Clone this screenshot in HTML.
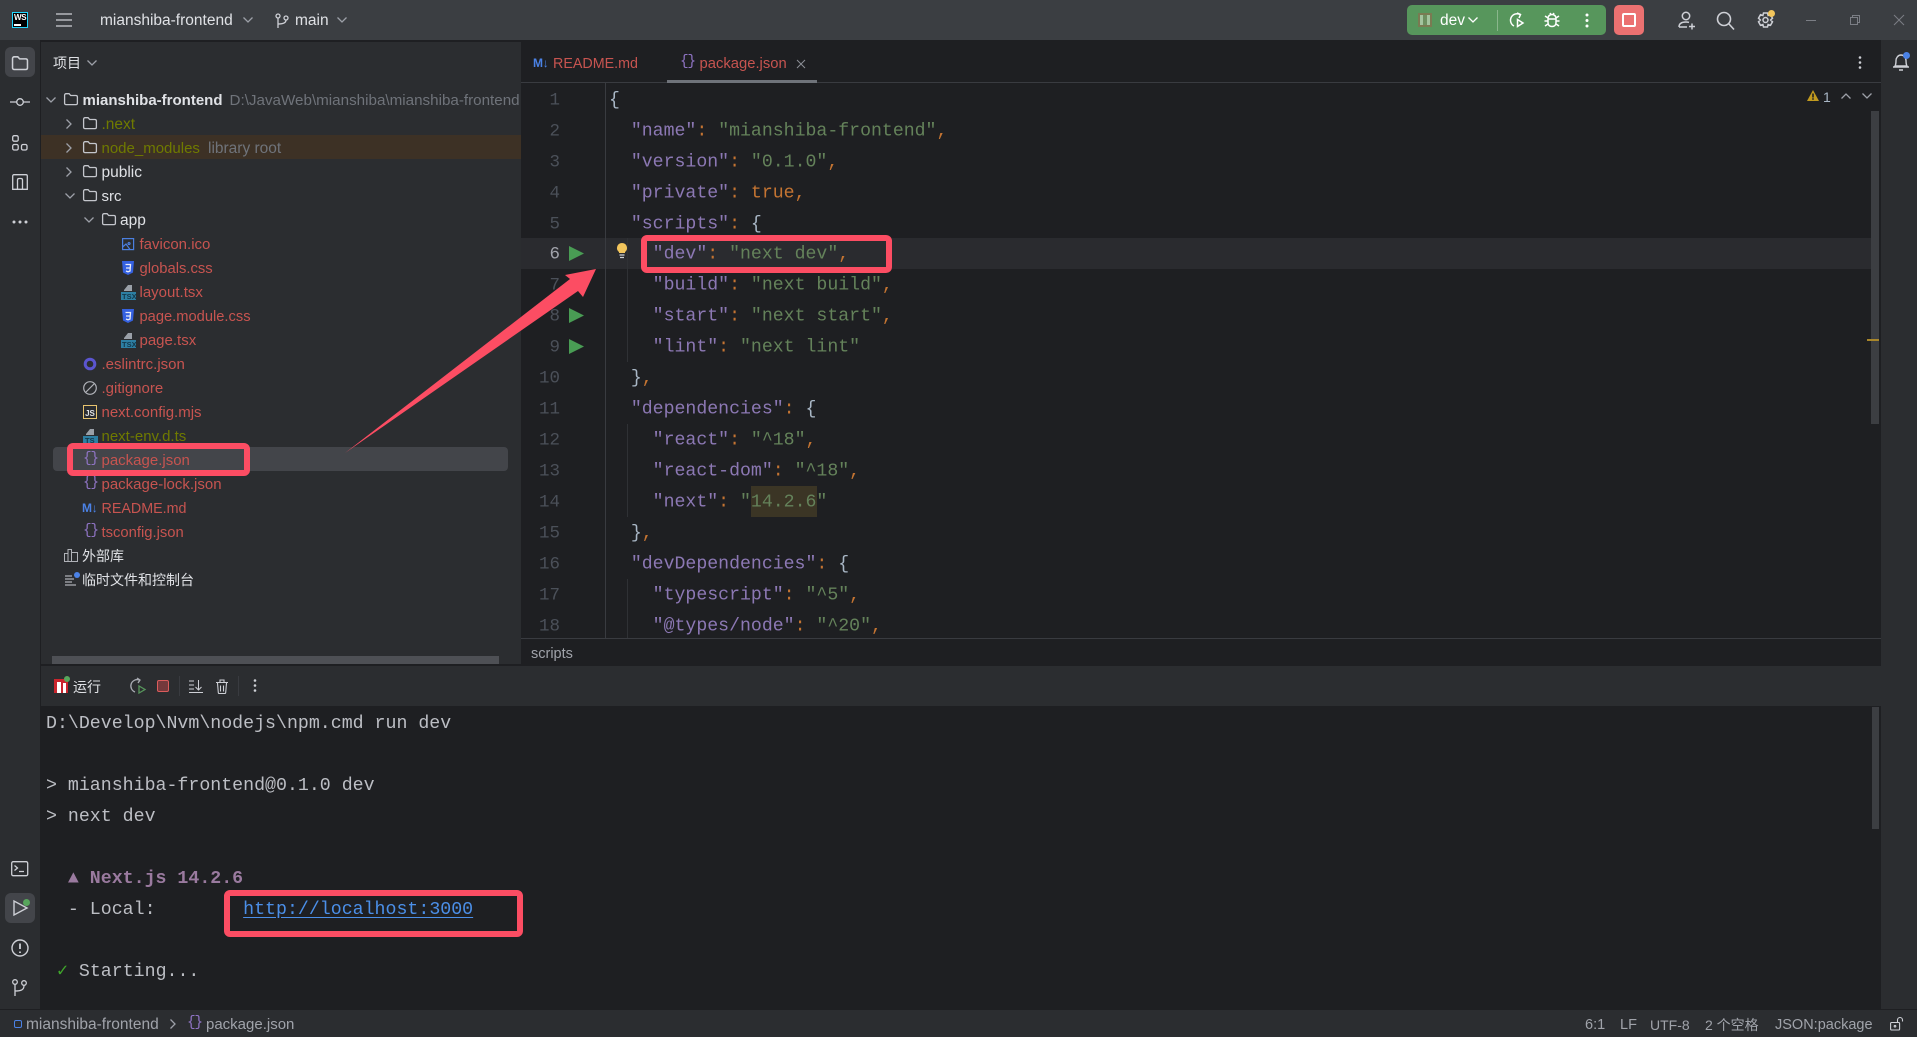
<!DOCTYPE html>
<html lang="zh"><head><meta charset="utf-8"><title>mianshiba-frontend</title>
<style>
html,body{margin:0;padding:0;width:1917px;height:1037px;overflow:hidden;background:#1e1f22}
*{box-sizing:border-box}
.a{position:absolute}
.t{position:absolute;white-space:pre;font:15.5px/24px "Liberation Sans","Noto Sans CJK SC",sans-serif;color:#dfe1e5;height:24px;transform:translateY(1px)}
.r{color:#c75450;font-size:15px}.o{color:#6f7a00}.g{color:#6f737a}
.c{position:absolute;white-space:pre;font:18.2px/31px "Liberation Mono",monospace;color:#a9b7c6;left:609px;height:31px;transform:translateY(1.700px)}
.n{position:absolute;left:520px;width:40px;text-align:right;font:17.5px/31px "Liberation Mono",monospace;color:#4b5059;height:31px;transform:translateY(1.500px)}
.k{color:#8c78b4}.s{color:#64825a}.p{color:#c47432}
.l{position:absolute;white-space:pre;font:18.25px/31px "Liberation Mono",monospace;color:#bcbec4;left:46px;height:31px;transform:translateY(2px)}
.box{position:absolute;border:6px solid #fc4d63;border-radius:6px}
svg{position:absolute;overflow:visible;fill:none;stroke:#ced0d6;stroke-width:1.3}
.ch{stroke:#9da0a8;stroke-width:1.3}
.br{position:absolute;white-space:pre;font:14.5px/18px "Liberation Mono",monospace;color:#8f74c4;letter-spacing:-1.3px}
</style></head><body>
<svg width="0" height="0" style="position:absolute"><defs>
<symbol id="fold" viewBox="0 0 14 12" overflow="visible"><path d="M.6 2.2c0-.9.6-1.5 1.5-1.5h3l1.6 1.8h5.2c.9 0 1.5.6 1.5 1.5v6.2c0 .9-.6 1.400-1.500 1.400H2.100c-.9 0-1.500-.5-1.500-1.400z"/></symbol>
<symbol id="r" viewBox="0 0 8 12" overflow="visible"><path d="M1.500 1.500 6 6l-4.500 4.500"/></symbol>
<symbol id="d" viewBox="0 0 12 8" overflow="visible"><path d="M1.500 1.500 6 6l4.500-4.500"/></symbol>
<symbol id="play" viewBox="0 0 15 15" overflow="visible"><path d="M0 0 15 7.500 0 15z" fill="#499c54" stroke="none"/></symbol>
<symbol id="css" viewBox="0 0 12 14" overflow="visible"><path d="M0 0h12l-1 11.500L6 14 1 11.500z" fill="#3561e0" stroke="none"/><path d="M3.500 3.500h5L8 10 6 10.800 4 10M4 7h4" stroke="#e8ecf8" stroke-width="1.300"/></symbol>
</defs></svg>

<!-- backgrounds -->
<div class="a" style="left:0;top:0;width:1917px;height:40px;background:#3b3e42"></div>
<div class="a" style="left:0;top:40px;width:40px;height:969px;background:#2b2d30"></div>
<div class="a" style="left:40px;top:40px;width:1px;height:969px;background:#1e1f22"></div>
<div class="a" style="left:41px;top:42px;width:480px;height:622px;background:#2b2d30"></div>
<div class="a" style="left:521px;top:40px;width:1360px;height:626px;background:#1e1f22"></div>
<div class="a" style="left:1881px;top:40px;width:36px;height:969px;background:#2b2d30"></div>
<div class="a" style="left:41px;top:666px;width:1840px;height:40px;background:#2b2d30"></div>
<div class="a" style="left:41px;top:665px;width:1840px;height:1px;background:#1e1f22"></div>
<div class="a" style="left:41px;top:706px;width:1840px;height:303px;background:#1e1f22"></div>
<div class="a" style="left:0;top:1009px;width:1917px;height:28px;background:#2b2d30;border-top:1px solid #1e1f22"></div>

<!-- title bar -->
<div class="a" style="left:12px;top:12px;width:16px;height:16px;background:#000;border:1px solid #21d7ff"></div>
<div class="a" style="left:14px;top:13px;font:bold 8px/10px 'Liberation Sans',sans-serif;color:#fff;letter-spacing:-.3px">WS</div>
<div class="a" style="left:14px;top:24px;width:7px;height:1.500px;background:#fff"></div>
<svg style="left:56px;top:13px" width="16" height="14"><path d="M0 1h16M0 7h16M0 13h16"/></svg>
<div class="t" style="left:100px;top:8px">mianshiba-frontend</div>
<svg class="ch" style="left:242px;top:16px" width="12" height="8"><use href="#d"/></svg>
<svg style="left:275px;top:13px" width="14" height="16"><circle cx="3" cy="3" r="2"/><circle cx="11" cy="5" r="2"/><path d="M3 5v10M3 11c5 0 8-1 8-4"/></svg>
<div class="t" style="left:295px;top:8px">main</div>
<svg class="ch" style="left:336px;top:16px" width="12" height="8"><use href="#d"/></svg>

<div class="a" style="left:1407px;top:5px;width:199px;height:30px;background:#57965c;border-radius:5px"></div>
<div class="a" style="left:1418px;top:13px;width:14px;height:14px;background:#a3c49f;border:2px solid #7a7a52"></div>
<div class="a" style="left:1423px;top:15px;width:4px;height:10px;background:#6c8f60"></div>
<div class="t" style="left:1440px;top:8px;color:#fff">dev</div>
<svg style="left:1467px;top:16px;stroke:#fff" width="12" height="8"><use href="#d"/></svg>
<div class="a" style="left:1497px;top:10px;width:1px;height:21px;background:#8ab68c"></div>
<svg style="left:1509px;top:12px;stroke:#fff;stroke-width:1.500" width="16" height="16"><path d="M11 2.500A6.200 6.200 0 1 0 5 14"/><path d="M8 1l3.500 1.500L10 6"/><path d="M8.500 7.500v7l5.500-3.500z"/></svg>
<svg style="left:1544px;top:12px;stroke:#fff;stroke-width:1.500" width="16" height="16"><path d="M4 7c0-3 1.500-4.500 4-4.500S12 4 12 7v3.500c0 2.500-1.500 4-4 4s-4-1.500-4-4zM4 7h8M1 4l3 2M15 4l-3 2M.5 9H4M15.500 9H12M1 14l3-2M15 14l-3-2M6 1l1 1.500M10 1L9 2.500"/></svg>
<svg style="left:1585px;top:13px;stroke:none;fill:#fff" width="4" height="15"><circle cx="2" cy="2" r="1.500"/><circle cx="2" cy="7.500" r="1.500"/><circle cx="2" cy="13" r="1.500"/></svg>
<div class="a" style="left:1614px;top:5px;width:30px;height:30px;background:#eb7171;border-radius:5px"></div>
<div class="a" style="left:1622px;top:13px;width:14px;height:14px;border:2px solid #fff;border-radius:2px"></div>
<svg style="left:1678px;top:11px;stroke-width:1.500" width="18" height="18"><circle cx="8" cy="5" r="3.700"/><path d="M1 16c0-3.500 2.500-5 7-5 1 0 2 .1 3 .4M1 16h8M14 12.500v6M11 15.500h6"/></svg>
<svg style="left:1717px;top:12px;stroke-width:1.600" width="18" height="18"><circle cx="7" cy="7" r="6.500"/><path d="M12 12l5 5.500"/></svg>
<svg style="left:1757px;top:12px;stroke-width:1.500" width="17" height="18"><path d="M6.500 1h4l.6 2.500 2.400-.8 2 3.500-1.900 1.800 1.900 1.800-2 3.500-2.400-.8-.6 2.500h-4l-.6-2.500-2.400.8-2-3.500L3.400 8 1.500 6.200l2-3.500 2.400.8z"/><circle cx="8.500" cy="8" r="2.500"/></svg>
<div class="a" style="left:1768px;top:10px;width:7px;height:7px;border-radius:50%;background:#f2c55c"></div>
<div class="a" style="left:1806px;top:20px;width:10px;height:1px;background:#7b7e85"></div>
<svg style="left:1850px;top:15px;stroke:#7b7e85;stroke-width:1" width="10" height="10"><path d="M.500 2.500h7v7h-7zM2.500 2.500v-2h7v7h-2"/></svg>
<svg style="left:1894px;top:15px;stroke:#7b7e85;stroke-width:1" width="10" height="10"><path d="M0 0l10 10M10 0L0 10"/></svg>

<!-- left strip -->
<div class="a" style="left:5px;top:47px;width:30px;height:30px;background:#43454a;border-radius:6px"></div>
<svg style="left:11px;top:56px;stroke-width:1.300" width="18" height="14" viewBox="0 0 14 12" ><use href="#fold" width="14" height="12"/></svg>
<svg style="left:10px;top:97px" width="20" height="10"><circle cx="10" cy="5" r="3.300"/><path d="M0 5h6.500M13.500 5H20"/></svg>
<svg style="left:12px;top:135px" width="16" height="16"><rect x=".7" y=".7" width="5.500" height="5.500" rx="1.500"/><rect x=".7" y="9.500" width="5.500" height="5.500" rx="1.500"/><rect x="9.500" y="9.500" width="5.500" height="5.500" rx="1.500"/></svg>
<svg style="left:12px;top:174px" width="16" height="16"><path d="M.7 2c0-.8.500-1.300 1.300-1.300h12c.8 0 1.300.500 1.300 1.300v13.300H.7zM5.500 15.300V6c0-1 .5-1.500 1.500-1.500h2c1 0 1.500.5 1.500 1.500v9.300"/></svg>
<svg style="left:12px;top:220px;stroke:none;fill:#ced0d6" width="16" height="4"><circle cx="2" cy="2" r="1.500"/><circle cx="8" cy="2" r="1.500"/><circle cx="14" cy="2" r="1.500"/></svg>
<svg style="left:11px;top:861px" width="18" height="15"><rect x=".7" y=".7" width="16" height="14" rx="1.500"/><path d="M3.500 4.500 6.500 7l-3 2.500M8 10.500h5"/></svg>
<div class="a" style="left:5px;top:893px;width:30px;height:30px;background:#43454a;border-radius:6px"></div>
<svg style="left:13px;top:900px;stroke-width:1.400" width="14" height="16"><path d="M1 1v14l13-7z"/></svg>
<div class="a" style="left:23px;top:899px;width:7px;height:7px;border-radius:50%;background:#57a65c"></div>
<svg style="left:11px;top:939px;stroke-width:1.400" width="18" height="18"><circle cx="9" cy="9" r="8"/><path d="M9 4.500v5.500M9 12.500v1.500" stroke-width="1.800"/></svg>
<svg style="left:12px;top:979px" width="16" height="17"><circle cx="3" cy="3" r="2.300"/><circle cx="12" cy="4" r="2.300"/><path d="M3 5.500V17M3 12c6 0 9-1 9-5.500"/></svg>

<!-- project panel -->
<div class="t" style="left:53px;top:50px;font-size:14px">项目</div>
<svg class="ch" style="left:86px;top:59px" width="12" height="8"><use href="#d"/></svg>

<div class="a" style="left:41px;top:135px;width:480px;height:24px;background:#3d3125"></div>
<div class="a" style="left:53px;top:447px;width:455px;height:24px;background:#43454a;border-radius:4px"></div>

<svg class="ch" style="left:45px;top:96px" width="12" height="8"><use href="#d"/></svg>
<svg style="left:64px;top:93px;stroke:#c4c6cc" width="14" height="12"><use href="#fold"/></svg>
<div class="a" style="left:82.500px;top:88px;width:438px;height:26px;overflow:hidden"><span class="t" style="left:0;top:0;font-weight:bold;font-size:15px">mianshiba-frontend</span><span class="t g" style="left:147px;top:0;font-size:15.200px">D:\JavaWeb\mianshiba\mianshiba-frontend</span></div>

<svg class="ch" style="left:65px;top:118px" width="8" height="12"><use href="#r"/></svg>
<svg style="left:83px;top:117px;stroke:#c4c6cc" width="14" height="12"><use href="#fold"/></svg>
<div class="t o" style="left:101.500px;top:112px">.next</div>

<svg class="ch" style="left:65px;top:142px" width="8" height="12"><use href="#r"/></svg>
<svg style="left:83px;top:141px;stroke:#c4c6cc" width="14" height="12"><use href="#fold"/></svg>
<div class="t o" style="left:101.500px;top:136px;font-size:15px">node_modules</div>
<div class="t g" style="left:208px;top:136px">library root</div>

<svg class="ch" style="left:65px;top:166px" width="8" height="12"><use href="#r"/></svg>
<svg style="left:83px;top:165px;stroke:#c4c6cc" width="14" height="12"><use href="#fold"/></svg>
<div class="t" style="left:101.500px;top:160px">public</div>

<svg class="ch" style="left:64px;top:192px" width="12" height="8"><use href="#d"/></svg>
<svg style="left:83px;top:189px;stroke:#c4c6cc" width="14" height="12"><use href="#fold"/></svg>
<div class="t" style="left:101.500px;top:184px;font-size:15px">src</div>

<svg class="ch" style="left:83px;top:216px" width="12" height="8"><use href="#d"/></svg>
<svg style="left:102px;top:213px;stroke:#c4c6cc" width="14" height="12"><use href="#fold"/></svg>
<div class="t" style="left:120px;top:208px">app</div>

<svg style="left:122px;top:238px;stroke:#4b7fe0;stroke-width:1.200" width="12" height="12"><rect x=".6" y=".6" width="11" height="11"/><path d="M.6 9 4 6l4 5.500M7 4.500a1 1 0 1 0 .1 0"/></svg>
<div class="t r" style="left:139.500px;top:232px">favicon.ico</div>
<svg style="left:122px;top:261px" width="12" height="14"><use href="#css"/></svg>
<div class="t r" style="left:139.500px;top:256px;font-size:14.800px">globals.css</div>
<svg style="left:121px;top:284px;stroke:none" width="15" height="16"><path d="M3 6 7 1h4v6H3z" fill="#9aa0a8"/><rect y="8" width="15" height="8" fill="#2d7fa3"/><text x="1" y="15" font-family="Liberation Sans" font-size="7.500" font-weight="bold" fill="#14384a">TSX</text></svg>
<div class="t r" style="left:139.500px;top:280px">layout.tsx</div>
<svg style="left:122px;top:309px" width="12" height="14"><use href="#css"/></svg>
<div class="t r" style="left:139.500px;top:304px;font-size:14.700px">page.module.css</div>
<svg style="left:121px;top:332px;stroke:none" width="15" height="16"><path d="M3 6 7 1h4v6H3z" fill="#9aa0a8"/><rect y="8" width="15" height="8" fill="#2d7fa3"/><text x="1" y="15" font-family="Liberation Sans" font-size="7.500" font-weight="bold" fill="#14384a">TSX</text></svg>
<div class="t r" style="left:139.500px;top:328px">page.tsx</div>

<svg style="left:83px;top:357px;stroke:#5b55d0;stroke-width:3" width="14" height="14"><circle cx="7" cy="7" r="4.800"/></svg>
<div class="t r" style="left:101.500px;top:352px">.eslintrc.json</div>
<svg style="left:83px;top:381px;stroke:#b0b2b8;stroke-width:1.200" width="14" height="14"><circle cx="7" cy="7" r="6.300"/><path d="M3 11l8-8"/></svg>
<div class="t r" style="left:101.500px;top:376px">.gitignore</div>
<div class="a" style="left:83px;top:405px;width:14px;height:14px;border:1px solid #e8c46e;font:bold 8px/13px 'Liberation Sans',sans-serif;color:#dfe1e5;text-align:center;padding-top:1px">JS</div>
<div class="t r" style="left:101.500px;top:400px">next.config.mjs</div>
<svg style="left:83px;top:428px;stroke:none" width="15" height="16"><path d="M3 6 7 1h4v6H3z" fill="#9aa0a8"/><rect y="8" width="15" height="8" fill="#2d7fa3"/><text x="2" y="15" font-family="Liberation Sans" font-size="7.500" font-weight="bold" fill="#14384a">TS</text></svg>
<div class="t o" style="left:101.500px;top:424px;font-size:15px">next-env.d.ts</div>
<div class="br" style="left:83px;top:450px">{}</div>
<div class="t r" style="left:101.500px;top:448px">package.json</div>
<div class="br" style="left:83px;top:474px">{}</div>
<div class="t r" style="left:101.500px;top:472px">package-lock.json</div>
<div class="a" style="left:82px;top:501px;font:bold 12px/14px 'Liberation Sans',sans-serif;color:#4b82e6;letter-spacing:-.3px">M↓</div>
<div class="t r" style="left:101.500px;top:496px;font-size:14.300px">README.md</div>
<div class="br" style="left:83px;top:522px">{}</div>
<div class="t r" style="left:101.500px;top:520px;font-size:14.800px">tsconfig.json</div>
<svg style="left:64px;top:549px;stroke:#b0b2b8;stroke-width:1" width="14" height="13"><path d="M.5 4.500h3.500v8H.5zM4 .5h3.500v12H4zM7.500 3.500H13.500v9H7.500z"/></svg>
<div class="t" style="left:82px;top:543px;font-size:14px">外部库</div>
<svg style="left:65px;top:573px;stroke:#ced0d6;stroke-width:1" width="14" height="14"><path d="M0 3h7M0 6h9M0 9h7M0 12h11"/></svg>
<div class="a" style="left:74px;top:572px;width:6px;height:6px;border-radius:50%;background:#4b82e6"></div>
<div class="t" style="left:82px;top:567px;font-size:14px">临时文件和控制台</div>
<div class="a" style="left:52px;top:656px;width:447px;height:8px;background:#4e5055"></div>

<!-- editor tabs -->
<div class="a" style="left:533px;top:56px;font:bold 12px/14px 'Liberation Sans',sans-serif;color:#4b82e6;letter-spacing:-.3px">M↓</div>
<div class="t r" style="left:553px;top:51px;font-size:14.300px">README.md</div>
<div class="br" style="left:680px;top:53px">{}</div>
<div class="t r" style="left:699.500px;top:51px;font-size:14.800px">package.json</div>
<svg style="left:797px;top:60px;stroke:#8c8f96;stroke-width:1" width="8" height="8"><path d="M0 0l8 8M8 0L0 8"/></svg>
<div class="a" style="left:521px;top:82px;width:1360px;height:1px;background:#393b40"></div>
<div class="a" style="left:667px;top:80px;width:150px;height:3px;background:#6f737a"></div>
<svg style="left:1858px;top:56px;stroke:none;fill:#ced0d6" width="4" height="13"><circle cx="2" cy="1.500" r="1.300"/><circle cx="2" cy="6.500" r="1.300"/><circle cx="2" cy="11.500" r="1.300"/></svg>
<svg style="left:1892px;top:53px;stroke-width:1.400" width="18" height="19"><path d="M3 13c1-1.500 1-3 1-5.500S6 2 9 2s5 2.500 5 5.500.1 4 1 5.500zM1 14h16M7 17h4"/></svg>
<div class="a" style="left:1903px;top:52px;width:7px;height:7px;border-radius:50%;background:#4b82e6"></div>

<svg style="left:1807px;top:90px;stroke:none" width="12" height="11"><path d="M6 0l6 11H0z" fill="#c19a1f"/><path d="M5.200 3.500h1.600v4H5.200zM5.200 8.300h1.600v1.500H5.200z" fill="#1e1f22"/></svg>
<div class="t" style="left:1823px;top:84px;font-size:14px;color:#a9b7c6">1</div>
<svg class="ch" style="left:1840px;top:92px" width="12" height="8"><path d="M1.500 6.500 6 2l4.500 4.500"/></svg>
<svg class="ch" style="left:1861px;top:92px" width="12" height="8"><use href="#d"/></svg>

<!-- editor body -->
<div class="a" style="left:521px;top:238px;width:1350px;height:31px;background:#2a2b2f"></div>
<div class="a" style="left:605px;top:83px;width:1px;height:555px;background:#393b40"></div>
<div class="a" style="left:627px;top:238px;width:1px;height:124px;background:#2f3135"></div>
<div class="a" style="left:627px;top:424px;width:1px;height:93px;background:#2f3135"></div>
<div class="a" style="left:627px;top:579px;width:1px;height:59px;background:#2f3135"></div>
<div class="a" style="left:751px;top:486px;width:66px;height:31px;background:#3b3525"></div>

<div class="n" style="top:84px">1</div><div class="n" style="top:115px">2</div><div class="n" style="top:146px">3</div><div class="n" style="top:177px">4</div><div class="n" style="top:208px">5</div><div class="n" style="top:238px;color:#a1a3ab">6</div><div class="n" style="top:269px">7</div><div class="n" style="top:300px">8</div><div class="n" style="top:331px">9</div><div class="n" style="top:362px">10</div><div class="n" style="top:393px">11</div><div class="n" style="top:424px">12</div><div class="n" style="top:455px">13</div><div class="n" style="top:486px">14</div><div class="n" style="top:517px">15</div><div class="n" style="top:548px">16</div><div class="n" style="top:579px">17</div><div class="n" style="top:610px">18</div>

<svg style="left:569px;top:246px;stroke:none" width="15" height="15"><use href="#play"/></svg>
<svg style="left:569px;top:308px;stroke:none" width="15" height="15"><use href="#play"/></svg>
<svg style="left:569px;top:339px;stroke:none" width="15" height="15"><use href="#play"/></svg>
<svg style="left:617px;top:243px;stroke:none" width="10" height="15"><path d="M5 0a5 5 0 0 1 3 9v1H2V9a5 5 0 0 1 3-9z" fill="#f2c55c"/><path d="M2.500 12h5M3 14.500h4" stroke="#ced0d6" stroke-width="1.200"/></svg>

<div class="c" style="top:84px">{</div>
<div class="c" style="top:115px">  <span class="k">"name"</span><span class="p">:</span> <span class="s">"mianshiba-frontend"</span><span class="p">,</span></div>
<div class="c" style="top:146px">  <span class="k">"version"</span><span class="p">:</span> <span class="s">"0.1.0"</span><span class="p">,</span></div>
<div class="c" style="top:177px">  <span class="k">"private"</span><span class="p">:</span> <span class="p">true,</span></div>
<div class="c" style="top:208px">  <span class="k">"scripts"</span><span class="p">:</span> {</div>
<div class="c" style="top:238px">    <span class="k">"dev"</span><span class="p">:</span> <span class="s">"next dev"</span><span class="p">,</span></div>
<div class="c" style="top:269px">    <span class="k">"build"</span><span class="p">:</span> <span class="s">"next build"</span><span class="p">,</span></div>
<div class="c" style="top:300px">    <span class="k">"start"</span><span class="p">:</span> <span class="s">"next start"</span><span class="p">,</span></div>
<div class="c" style="top:331px">    <span class="k">"lint"</span><span class="p">:</span> <span class="s">"next lint"</span></div>
<div class="c" style="top:362px">  }<span class="p">,</span></div>
<div class="c" style="top:393px">  <span class="k">"dependencies"</span><span class="p">:</span> {</div>
<div class="c" style="top:424px">    <span class="k">"react"</span><span class="p">:</span> <span class="s">"^18"</span><span class="p">,</span></div>
<div class="c" style="top:455px">    <span class="k">"react-dom"</span><span class="p">:</span> <span class="s">"^18"</span><span class="p">,</span></div>
<div class="c" style="top:486px">    <span class="k">"next"</span><span class="p">:</span> <span class="s">"14.2.6"</span></div>
<div class="c" style="top:517px">  }<span class="p">,</span></div>
<div class="c" style="top:548px">  <span class="k">"devDependencies"</span><span class="p">:</span> {</div>
<div class="c" style="top:579px">    <span class="k">"typescript"</span><span class="p">:</span> <span class="s">"^5"</span><span class="p">,</span></div>
<div class="c" style="top:610px;height:27px;overflow:hidden">    <span class="k">"@types/node"</span><span class="p">:</span> <span class="s">"^20"</span><span class="p">,</span></div>

<div class="a" style="left:1871px;top:111px;width:8px;height:313px;background:#3c3e42"></div>
<div class="a" style="left:1867px;top:339px;width:12px;height:2px;background:#a8862b"></div>

<div class="a" style="left:521px;top:638px;width:1360px;height:1px;background:#393b40"></div>
<div class="t" style="left:531px;top:641px;font-size:14.500px;color:#a0a3aa">scripts</div>

<!-- run toolbar -->
<div class="a" style="left:54px;top:679px;width:14px;height:14px;background:#c9252d"></div>
<div class="a" style="left:57px;top:682px;width:4px;height:11px;background:#fff"></div>
<div class="a" style="left:63px;top:683px;width:3px;height:10px;background:#fff"></div>
<div class="a" style="left:64px;top:676px;width:6px;height:6px;border-radius:50%;background:#57a65c"></div>
<div class="t" style="left:73px;top:674px;font-size:14px">运行</div>
<svg style="left:130px;top:678px;stroke:#a8abb2" width="15" height="16"><path d="M9.500 2A6 6 0 1 0 5 14"/><path d="M7 0l3 2-2 3"/><path d="M9 8v7l6-3.500z" stroke="#57965c"/></svg>
<div class="a" style="left:157px;top:680px;width:12px;height:12px;background:#74393c;border:1px solid #db5c5c;border-radius:2px"></div>
<div class="a" style="left:179px;top:676px;width:1px;height:20px;background:#393b40"></div>
<svg style="left:189px;top:679px;stroke:#ced0d6;stroke-width:1" width="14" height="14"><path d="M0 2h5M0 6h5M0 10h5M0 13.500h14M9.500 1v10M6.500 8l3 3 3-3"/></svg>
<svg style="left:216px;top:679px;stroke:#ced0d6;stroke-width:1.100" width="12" height="15"><path d="M1.500 4l.8 9.500c0 .7.500 1 1 1h5.400c.5 0 1-.3 1-1L10.500 4M0 3.500h12M4 3.500V1h4v2.500M4.500 6.500v6M7.500 6.500v6"/></svg>
<div class="a" style="left:238px;top:676px;width:1px;height:20px;background:#393b40"></div>
<svg style="left:253px;top:679px;stroke:none;fill:#ced0d6" width="4" height="13"><circle cx="2" cy="1.500" r="1.300"/><circle cx="2" cy="6.500" r="1.300"/><circle cx="2" cy="11.500" r="1.300"/></svg>

<!-- console -->
<div class="l" style="top:707px">D:\Develop\Nvm\nodejs\npm.cmd run dev</div>
<div class="l" style="top:769px">&gt; mianshiba-frontend@0.1.0 dev</div>
<div class="l" style="top:800px">&gt; next dev</div>
<div class="l" style="top:862px;font-weight:bold;color:#9a7a9f">  ▲ Next.js 14.2.6</div>
<div class="l" style="top:893px">  - Local:        <span style="color:#4b8fe8;text-decoration:underline;text-underline-offset:3px">http://localhost:3000</span></div>
<div class="l" style="top:955px"> <span style="color:#3fa52b;font-weight:bold">✓</span> Starting...</div>
<div class="a" style="left:1872px;top:707px;width:7px;height:122px;background:#3c3e42"></div>

<!-- status bar -->
<div class="a" style="left:14px;top:1020px;width:8px;height:8px;border:1.500px solid #4b82e6;border-radius:2px"></div>
<div class="t" style="left:26px;top:1012px;color:#a0a3aa">mianshiba-frontend</div>
<svg class="ch" style="left:169px;top:1018px" width="8" height="12"><use href="#r"/></svg>
<div class="br" style="left:187px;top:1014px">{}</div>
<div class="t" style="left:206px;top:1012px;color:#a0a3aa;font-size:15px">package.json</div>
<div class="t" style="left:1585px;top:1012px;font-size:14.500px;color:#a0a3aa">6:1</div>
<div class="t" style="left:1620px;top:1012px;font-size:14.500px;color:#a0a3aa">LF</div>
<div class="t" style="left:1650px;top:1012px;font-size:14px;color:#a0a3aa">UTF-8</div>
<div class="t" style="left:1705px;top:1012px;font-size:14px;color:#a0a3aa">2 个空格</div>
<div class="t" style="left:1775px;top:1012px;font-size:14.500px;color:#a0a3aa">JSON:package</div>
<svg style="left:1890px;top:1017px;stroke:#ced0d6;stroke-width:1.100" width="14" height="14"><rect x=".6" y="5.500" width="9" height="7.500" rx="1"/><path d="M7.500 5.500V3a2.500 2.500 0 0 1 5 0v1.500"/><circle cx="5" cy="9.200" r=".8"/></svg>

<!-- annotations -->
<svg style="left:0;top:0;stroke:none" width="1917" height="1037"><path d="M345 453 570 279 565 275 596 269 583 297 578 291z" fill="#fc4d63"/></svg>
<div class="box" style="left:67px;top:443px;width:183px;height:33px"></div>
<div class="box" style="left:641px;top:235px;width:251px;height:38px"></div>
<div class="box" style="left:224px;top:890px;width:299px;height:47px"></div>
</body></html>
